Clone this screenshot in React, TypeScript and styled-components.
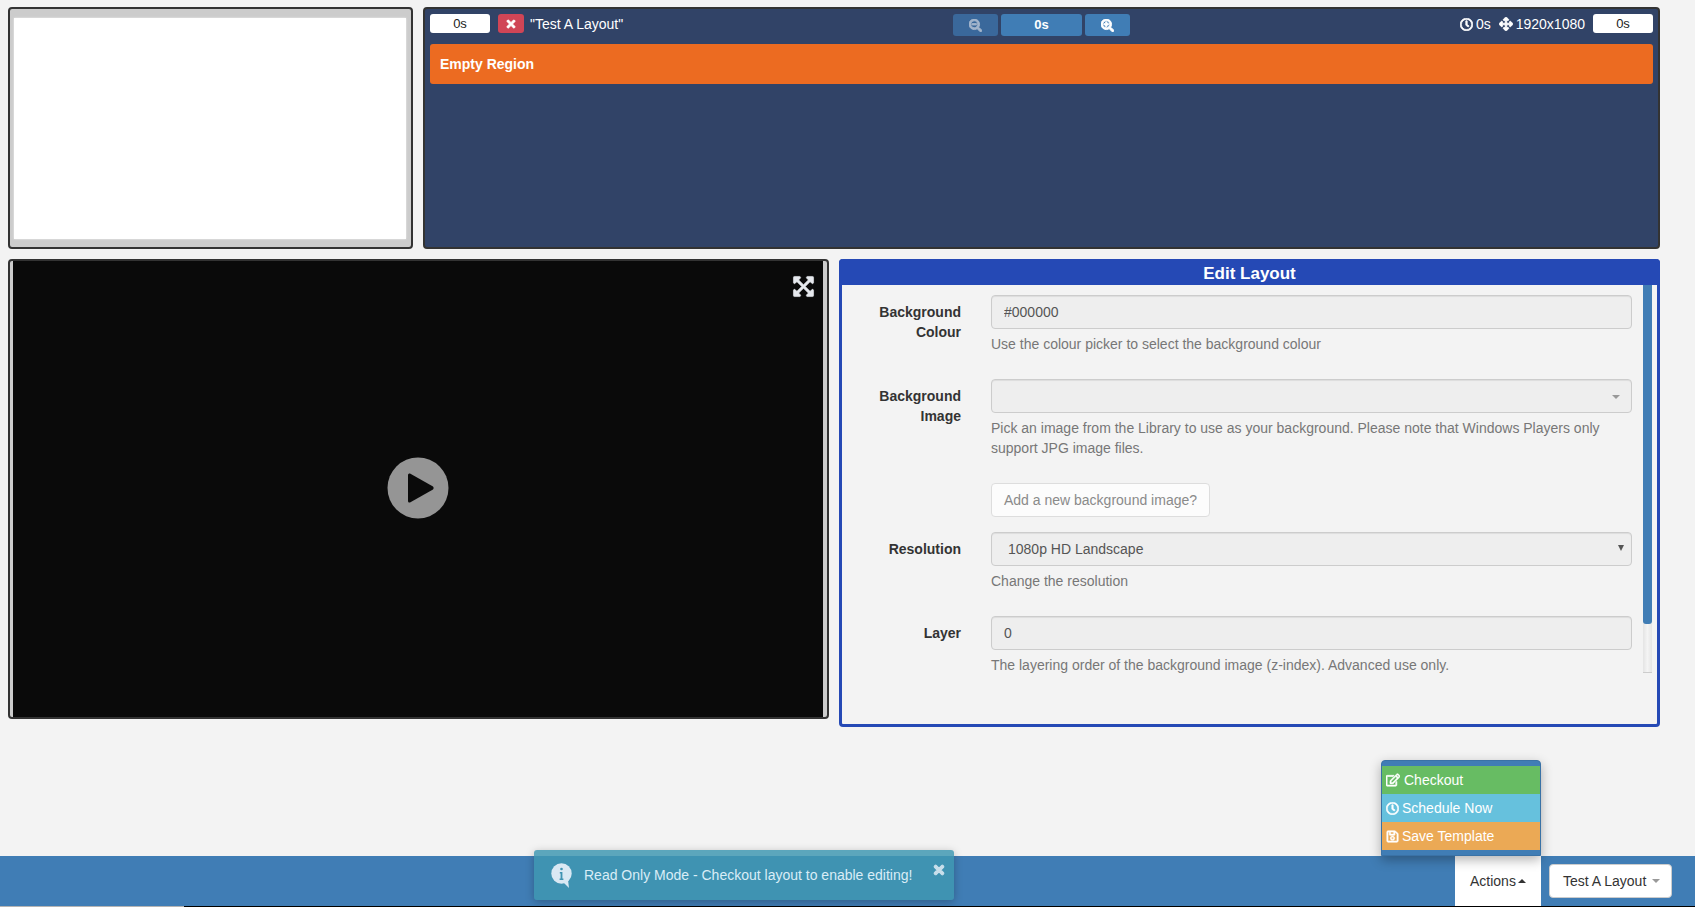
import React from 'react'
import styled, { createGlobalStyle } from 'styled-components'
import {
  FaExpandArrowsAlt,
  FaRegClock,
  FaRegEdit,
  FaRegSave,
  FaArrowsAlt,
  FaSearchMinus,
  FaSearchPlus,
  FaTimes,
} from 'react-icons/fa'

const GlobalStyle = createGlobalStyle`
  * { box-sizing: border-box; }
  html, body { margin: 0; padding: 0; }
  body {
    background: #f3f3f3;
    color: #333;
    font-family: "Liberation Sans", Arial, sans-serif;
    font-size: 14px;
    line-height: 20px;
  }
`

const Page = styled.div`
  width: 1695px;
  height: 907px;
  padding-top: 7px;
  display: flex;
  flex-direction: column;
  overflow: hidden;
`
const TopRow = styled.div`
  display: flex;
  gap: 10px;
  height: 242px;
  margin: 0 35px 0 8px;
`
const Thumbnail = styled.div`
  width: 405px;
  padding: 9px 5px 8px 4px;
  background: #ccc;
  border: 2px solid #333;
  border-radius: 4px;
`
const ThumbnailCanvas = styled.div`
  height: 100%;
  background: #fff;
  box-shadow: 0 0 2px rgba(255, 255, 255, 0.7);
`
const Timeline = styled.div`
  flex: 1;
  padding: 5px;
  background: #314367;
  border: 2px solid #333;
  border-radius: 4px;
`
const Toolbar = styled.div`
  display: grid;
  grid-template-columns: 1fr auto 1fr;
  height: 22px;
  margin-bottom: 8px;
  color: #fff;
`
const ToolGroup = styled.div<{ $align: string }>`
  display: flex;
  align-items: flex-start;
  justify-content: ${(p) => p.$align};
  gap: 8px;
  line-height: 20px;
`
const Duration = styled.div`
  width: 60px;
  height: 19px;
  background: #fff;
  border-radius: 3px;
  color: #222;
  font-size: 13px;
  line-height: 20px;
  text-align: center;
`
const RemoveButton = styled.div`
  width: 26px;
  height: 19px;
  display: flex;
  align-items: center;
  justify-content: center;
  background: #d04556;
  border-radius: 3px;
  color: #fff;
  font-size: 12px;
  svg {
    stroke: currentColor;
    stroke-width: 30px;
  }
`
const LayoutName = styled.span`
  margin-left: -2px;
  font-size: 14px;
`
const ZoomGroup = styled.div`
  display: flex;
  gap: 3px;
`
const ZoomButton = styled.div<{ $dim?: boolean; $wide?: boolean }>`
  width: ${(p) => (p.$wide ? 81 : 45)}px;
  height: 22px;
  display: flex;
  align-items: center;
  justify-content: center;
  background: ${(p) => (p.$dim ? '#3a689b' : '#407db5')};
  border-radius: 3px;
  color: ${(p) => (p.$dim ? '#a3b5cc' : '#fff')};
  font-size: 13px;
  font-weight: bold;
  svg {
    stroke: currentColor;
    stroke-width: 36px;
  }
`
const Stat = styled.span`
  display: flex;
  align-items: center;
  gap: 3px;
  font-size: 14px;
  svg {
    stroke: currentColor;
    stroke-width: 30px;
  }
`
const RegionBar = styled.div`
  height: 40px;
  padding-left: 10px;
  background: #ec6b21;
  border-radius: 3px;
  color: #fff;
  font-size: 14px;
  font-weight: bold;
  line-height: 40px;
`
const MainRow = styled.div`
  display: flex;
  align-items: flex-start;
  gap: 10px;
  margin: 10px 35px 0 8px;
`
const Preview = styled.div`
  position: relative;
  width: 821px;
  height: 460px;
  padding: 0 4px 0 3px;
  background: #ccc;
  border: 2px solid #333;
  border-radius: 4px;
`
const PreviewScreen = styled.div`
  height: 100%;
  padding: 0 1px 2px 0;
  display: flex;
  align-items: center;
  justify-content: center;
  background: #0a0a0a;
`
const FullscreenToggle = styled.div`
  position: absolute;
  top: 14px;
  right: 12px;
  display: flex;
  color: #e6e9ee;
  font-size: 23px;
  svg {
    stroke: currentColor;
    stroke-width: 14px;
  }
`
const EditPanel = styled.div`
  position: relative;
  flex: 1;
  height: 468px;
  background: #f3f3f3;
  border: 3px solid #2549b5;
  border-top-width: 0;
  border-radius: 4px;
`
const EditHeader = styled.div`
  height: 26px;
  margin: 0 -3px;
  background: #2549b5;
  border-radius: 4px 4px 0 0;
  color: #fff;
  font-size: 17px;
  font-weight: bold;
  line-height: 29px;
  text-align: center;
`
const EditBody = styled.div`
  display: flex;
  flex-direction: column;
  gap: 15px;
  padding-top: 10px;
`
const FormRow = styled.div`
  display: flex;
  gap: 30px;
`
const FieldLabel = styled.label`
  width: 119px;
  padding-top: 7px;
  color: #333;
  font-weight: bold;
  text-align: right;
`
const FieldColumn = styled.div`
  width: 641px;
`
const Input = styled.input`
  display: block;
  width: 100%;
  height: 34px;
  padding: 6px 12px;
  background: #eee;
  border: 1px solid #ccc;
  border-radius: 4px;
  box-shadow: inset 0 1px 1px rgba(0, 0, 0, 0.075);
  color: #555;
  font: inherit;
  outline: none;
`
const Select = styled.div<{ $indent: number }>`
  position: relative;
  height: 34px;
  padding: 6px 12px 6px ${(p) => p.$indent}px;
  background: #eee;
  border: 1px solid #ccc;
  border-radius: 4px;
  box-shadow: inset 0 1px 1px rgba(0, 0, 0, 0.075);
  color: #555;
`
const SelectCaret = styled.span<{ $dark?: boolean }>`
  position: absolute;
  top: ${(p) => (p.$dark ? 12 : 15)}px;
  right: ${(p) => (p.$dark ? 7 : 11)}px;
  border-top: ${(p) => (p.$dark ? '6px solid #555' : '4px solid #999')};
  border-left: ${(p) => (p.$dark ? 3 : 4)}px solid transparent;
  border-right: ${(p) => (p.$dark ? 3 : 4)}px solid transparent;
`
const HelpText = styled.p`
  margin: 5px 0 10px;
  color: #777;
`
const AddButton = styled.div`
  display: inline-block;
  height: 34px;
  padding: 6px 12px;
  background: #fcfcfc;
  border: 1px solid #ddd;
  border-radius: 4px;
  color: #8a8a8a;
`
const ScrollTrack = styled.div`
  position: absolute;
  top: 26px;
  right: 5px;
  width: 9px;
  height: 388px;
  background: linear-gradient(to right, #e4e4e4, #f4f4f4 50%, #e4e4e4);
  border-bottom: 1px solid #ccc;
`
const ScrollThumb = styled.div`
  height: 339px;
  background: #407db5;
  border-radius: 0 0 3px 3px;
`
const BottomBar = styled.div`
  position: relative;
  margin-top: auto;
  height: 50px;
  padding-right: 23px;
  display: flex;
  align-items: center;
  justify-content: flex-end;
  gap: 8px;
  background: #407db5;
`
const ActionsTab = styled.div`
  position: relative;
  width: 86px;
  height: 50px;
  padding-left: 15px;
  display: flex;
  align-items: center;
  gap: 2px;
  background: #fff;
  color: #333;
`
const CaretUp = styled.span`
  border-bottom: 4px solid #333;
  border-left: 4px solid transparent;
  border-right: 4px solid transparent;
`
const CaretDown = styled.span`
  border-top: 4px solid #999;
  border-left: 4px solid transparent;
  border-right: 4px solid transparent;
`
const ActionsMenu = styled.div`
  position: absolute;
  right: 0;
  bottom: 100%;
  width: 160px;
  padding: 5px 0 5px;
  background: #407db5;
  border: 1px solid #3a72a6;
  border-radius: 4px 4px 0 0;
  box-shadow: 0 4px 12px rgba(0, 0, 0, 0.3);
`
const MenuItem = styled.div<{ $color: string; $gap: number }>`
  height: 28px;
  padding-left: 4px;
  display: flex;
  align-items: center;
  gap: ${(p) => p.$gap}px;
  background: ${(p) => p.$color};
  color: #fff;
  font-size: 14px;
  svg {
    stroke: currentColor;
    stroke-width: 24px;
  }
`
const LayoutButton = styled.div`
  width: 123px;
  height: 34px;
  padding-left: 13px;
  display: flex;
  align-items: center;
  gap: 6px;
  background: #fff;
  border: 1px solid #ccc;
  border-radius: 4px;
  color: #333;
`
const Toast = styled.div`
  position: absolute;
  left: 534px;
  top: -6px;
  width: 420px;
  height: 50px;
  padding: 0 0 0 17px;
  display: flex;
  align-items: center;
  gap: 12px;
  background: rgba(63, 151, 177, 0.84);
  border-radius: 3px;
  box-shadow: 0 2px 8px rgba(0, 0, 0, 0.25);
  color: #d9edf7;
`
const ToastClose = styled.span`
  position: absolute;
  top: 13px;
  right: 8px;
  display: flex;
  color: #c9dfeb;
  font-size: 14px;
  svg {
    stroke: currentColor;
    stroke-width: 40px;
  }
`
const BottomEdge = styled.div`
  height: 1px;
  display: flex;
  background: #000;
`
const EdgeThumb = styled.div`
  width: 184px;
  background: #b4b4b4;
`

const InfoBubble = () => (
  <svg width="21" height="25" viewBox="0 0 21 25" aria-hidden="true">
    <circle cx="10.5" cy="10.5" r="10.2" fill="#d9e8f3" />
    <path d="M12 19l6 6-1-8z" fill="#d9e8f3" />
    <circle cx="10.5" cy="6" r="1.3" fill="#3f93b2" />
    <path d="M8.8 9h2.6v6.6h1V17H8.6v-1.4h1v-5.2h-.8z" fill="#3f93b2" />
  </svg>
)

const PlayButton = () => (
  <svg width="62" height="62" viewBox="0 0 62 62" aria-hidden="true">
    <circle cx="31" cy="31" r="30.5" fill="#959595" />
    <path d="M23 16.5 L46 29.5 Q47.5 31 46 32.5 L23 45.5 Q21 46 21 44 V18 Q21 16 23 16.5Z" fill="#0a0a0a" />
  </svg>
)

export default function App() {
  return (
    <Page>
      <GlobalStyle />
      <TopRow>
        <Thumbnail>
          <ThumbnailCanvas />
        </Thumbnail>
        <Timeline>
          <Toolbar>
            <ToolGroup $align="flex-start">
              <Duration>0s</Duration>
              <RemoveButton>
                <FaTimes />
              </RemoveButton>
              <LayoutName>"Test A Layout"</LayoutName>
            </ToolGroup>
            <ZoomGroup>
              <ZoomButton $dim>
                <FaSearchMinus />
              </ZoomButton>
              <ZoomButton $wide>0s</ZoomButton>
              <ZoomButton>
                <FaSearchPlus />
              </ZoomButton>
            </ZoomGroup>
            <ToolGroup $align="flex-end">
              <Stat>
                <FaRegClock size={13} /> 0s
              </Stat>
              <Stat>
                <FaArrowsAlt size={14} /> 1920x1080
              </Stat>
              <Duration>0s</Duration>
            </ToolGroup>
          </Toolbar>
          <RegionBar>Empty Region</RegionBar>
        </Timeline>
      </TopRow>

      <MainRow>
        <Preview>
          <PreviewScreen>
            <PlayButton />
          </PreviewScreen>
          <FullscreenToggle>
            <FaExpandArrowsAlt />
          </FullscreenToggle>
        </Preview>
        <EditPanel>
          <EditHeader>Edit Layout</EditHeader>
          <EditBody>
            <FormRow>
              <FieldLabel>Background Colour</FieldLabel>
              <FieldColumn>
                <Input readOnly value="#000000" />
                <HelpText>Use the colour picker to select the background colour</HelpText>
              </FieldColumn>
            </FormRow>
            <FormRow>
              <FieldLabel>Background Image</FieldLabel>
              <FieldColumn>
                <Select $indent={12}>
                  <SelectCaret />
                </Select>
                <HelpText>
                  Pick an image from the Library to use as your background. Please note that Windows Players only
                  support JPG image files.
                </HelpText>
              </FieldColumn>
            </FormRow>
            <FormRow>
              <FieldLabel />
              <FieldColumn>
                <AddButton>Add a new background image?</AddButton>
              </FieldColumn>
            </FormRow>
            <FormRow>
              <FieldLabel>Resolution</FieldLabel>
              <FieldColumn>
                <Select $indent={16}>
                  1080p HD Landscape
                  <SelectCaret $dark />
                </Select>
                <HelpText>Change the resolution</HelpText>
              </FieldColumn>
            </FormRow>
            <FormRow>
              <FieldLabel>Layer</FieldLabel>
              <FieldColumn>
                <Input readOnly value="0" />
                <HelpText>The layering order of the background image (z-index). Advanced use only.</HelpText>
              </FieldColumn>
            </FormRow>
          </EditBody>
          <ScrollTrack>
            <ScrollThumb />
          </ScrollTrack>
        </EditPanel>
      </MainRow>

      <BottomBar>
        <Toast>
          <InfoBubble />
          Read Only Mode - Checkout layout to enable editing!
          <ToastClose>
            <FaTimes />
          </ToastClose>
        </Toast>
        <ActionsTab>
          Actions
          <CaretUp />
          <ActionsMenu>
            <MenuItem $color="#67bc63" $gap={4}>
              <FaRegEdit size={14} /> Checkout
            </MenuItem>
            <MenuItem $color="#66c1dd" $gap={3}>
              <FaRegClock size={13} /> Schedule Now
            </MenuItem>
            <MenuItem $color="#eba955" $gap={3}>
              <FaRegSave size={13} /> Save Template
            </MenuItem>
          </ActionsMenu>
        </ActionsTab>
        <LayoutButton>
          Test A Layout
          <CaretDown />
        </LayoutButton>
      </BottomBar>
      <BottomEdge>
        <EdgeThumb />
      </BottomEdge>
    </Page>
  )
}
